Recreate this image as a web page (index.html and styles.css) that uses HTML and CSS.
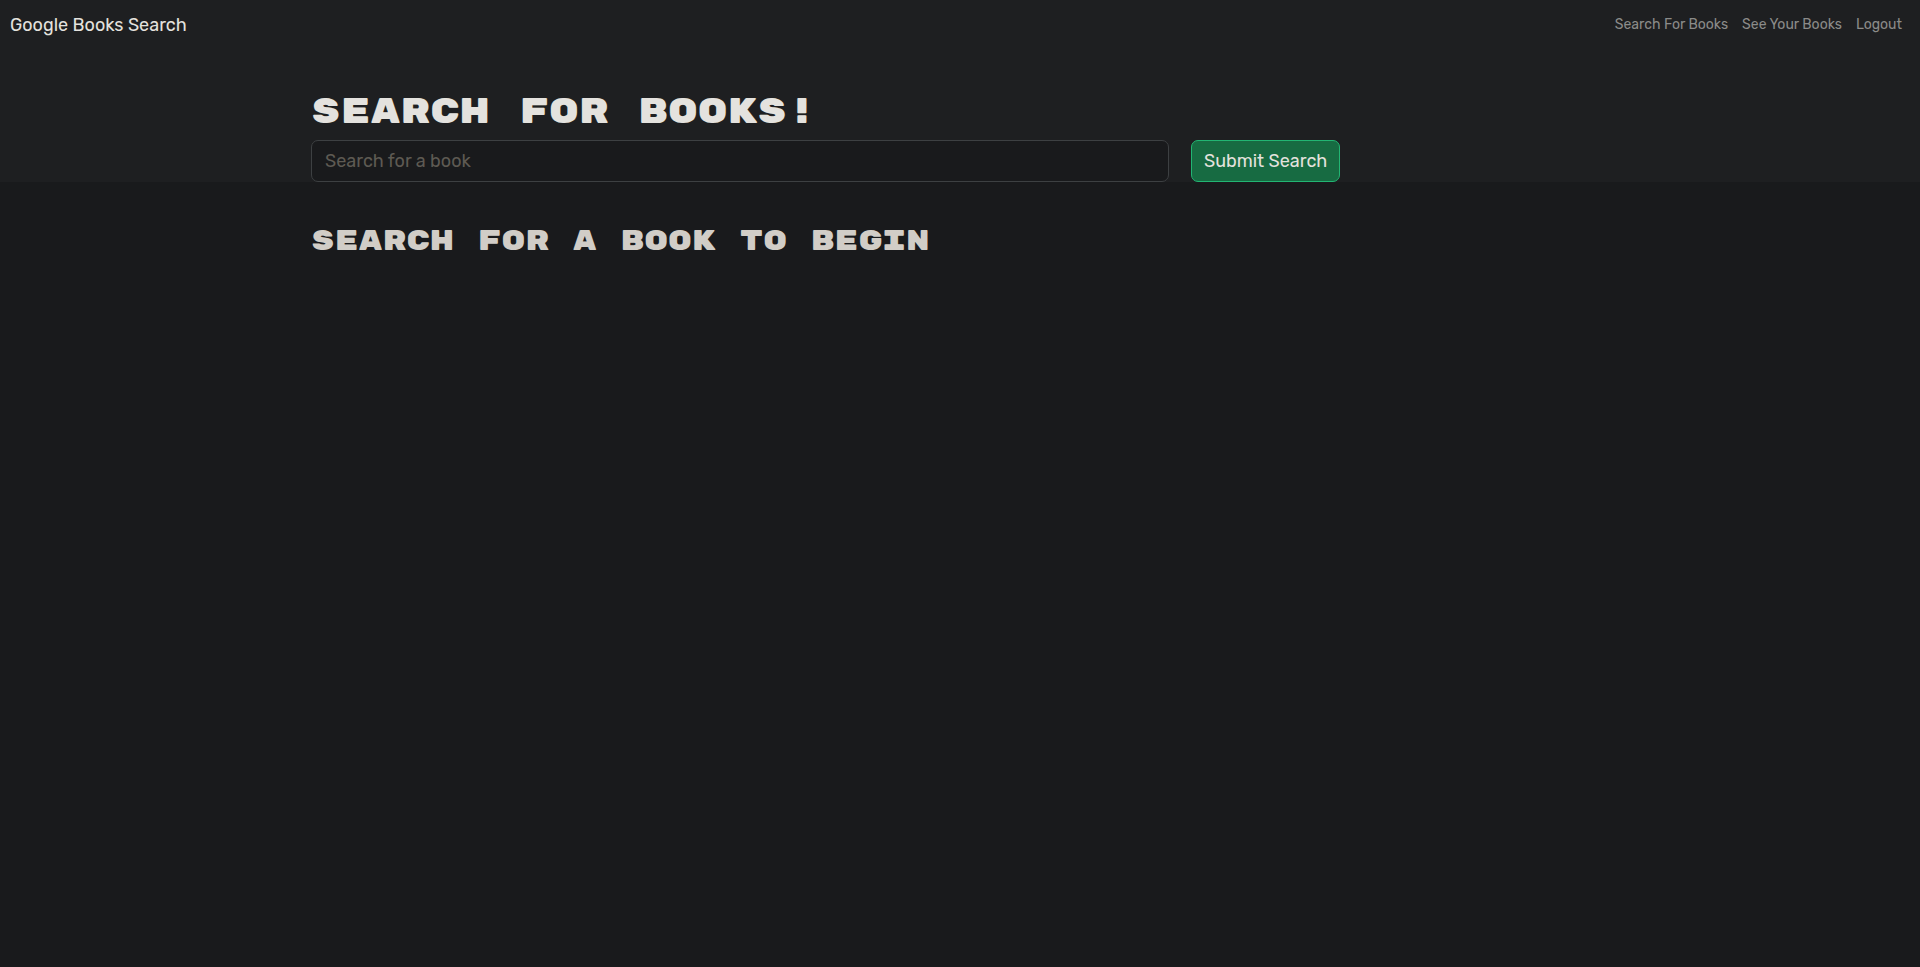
FILE: index.html
```html
<!DOCTYPE html>
<html lang="en">
<head>
  <meta charset="utf-8">
  <meta name="viewport" content="width=device-width, initial-scale=1">
  <title>Google Books Search</title>
  <link rel="stylesheet" href="styles.css">
</head>
<body>
  <header class="navbar">
    <a class="brand" href="#">Google Books Search</a>
    <nav class="nav">
      <a href="#">Search For Books</a>
      <a href="#">See Your Books</a>
      <a href="#">Logout</a>
    </nav>
  </header>
  <main>
    <section class="hero">
      <div class="container">
        <h1>SEARCH FOR BOOKS!</h1>
        <form class="search">
          <div class="col"><input type="text" name="q" placeholder="Search for a book" aria-label="Search for a book"></div>
          <div class="col"><button type="submit">Submit Search</button></div>
        </form>
      </div>
    </section>
    <section class="results container">
      <h2>SEARCH FOR A BOOK TO BEGIN</h2>
    </section>
  </main>
</body>
</html>
```

FILE: styles.css
```css
* { box-sizing: border-box; }

body {
  margin: 0;
  background: #191a1c;
  color: #d1cdc7;
  font: 18px/26px Rubik, Roboto, sans-serif;
}

a { color: inherit; text-decoration: none; }

.navbar {
  display: flex;
  align-items: center;
  justify-content: space-between;
  padding: 12px 18px 12px 10px;
  background: #1e1f21;
}

.brand { color: #e4e2de; }

.nav {
  display: flex;
  gap: 14px;
  color: #8b8b89;
  font-size: 14px;
  line-height: 24px;
}

.hero {
  padding-top: 41px;
  background: #1e1f21;
}

.container {
  max-width: 1320px;
  margin: 0 auto;
  padding-left: 11px;
  padding-right: 11px;
}

h1, h2 {
  margin: 0;
  font-family: "Rubik Mono One", "DejaVu Sans", sans-serif;
  font-weight: 500;
}

h1 {
  padding-bottom: 7px;
  color: #e4e2de;
  font-size: 35px;
  line-height: 42px;
}

h2 {
  font-size: 28px;
  line-height: 34px;
}

.search {
  display: grid;
  grid-template-columns: 2fr 1fr;
  margin: 0 -11px;
}

.col {
  display: flex;
  padding: 0 11px;
}

.search input,
.search button {
  height: 42px;
  padding: 0 12px;
  border: 1px solid #3d4042;
  border-radius: 7px;
  color: #e4e2de;
  font: inherit;
}

.search input {
  width: 100%;
  padding-left: 13px;
  background: #191a1c;
}

.search input::placeholder { color: #5e5a53; opacity: 1; }

.search button {
  border-color: #22b573;
  background: #176b42;
  cursor: pointer;
}

.results { padding-top: 43px; }
```
